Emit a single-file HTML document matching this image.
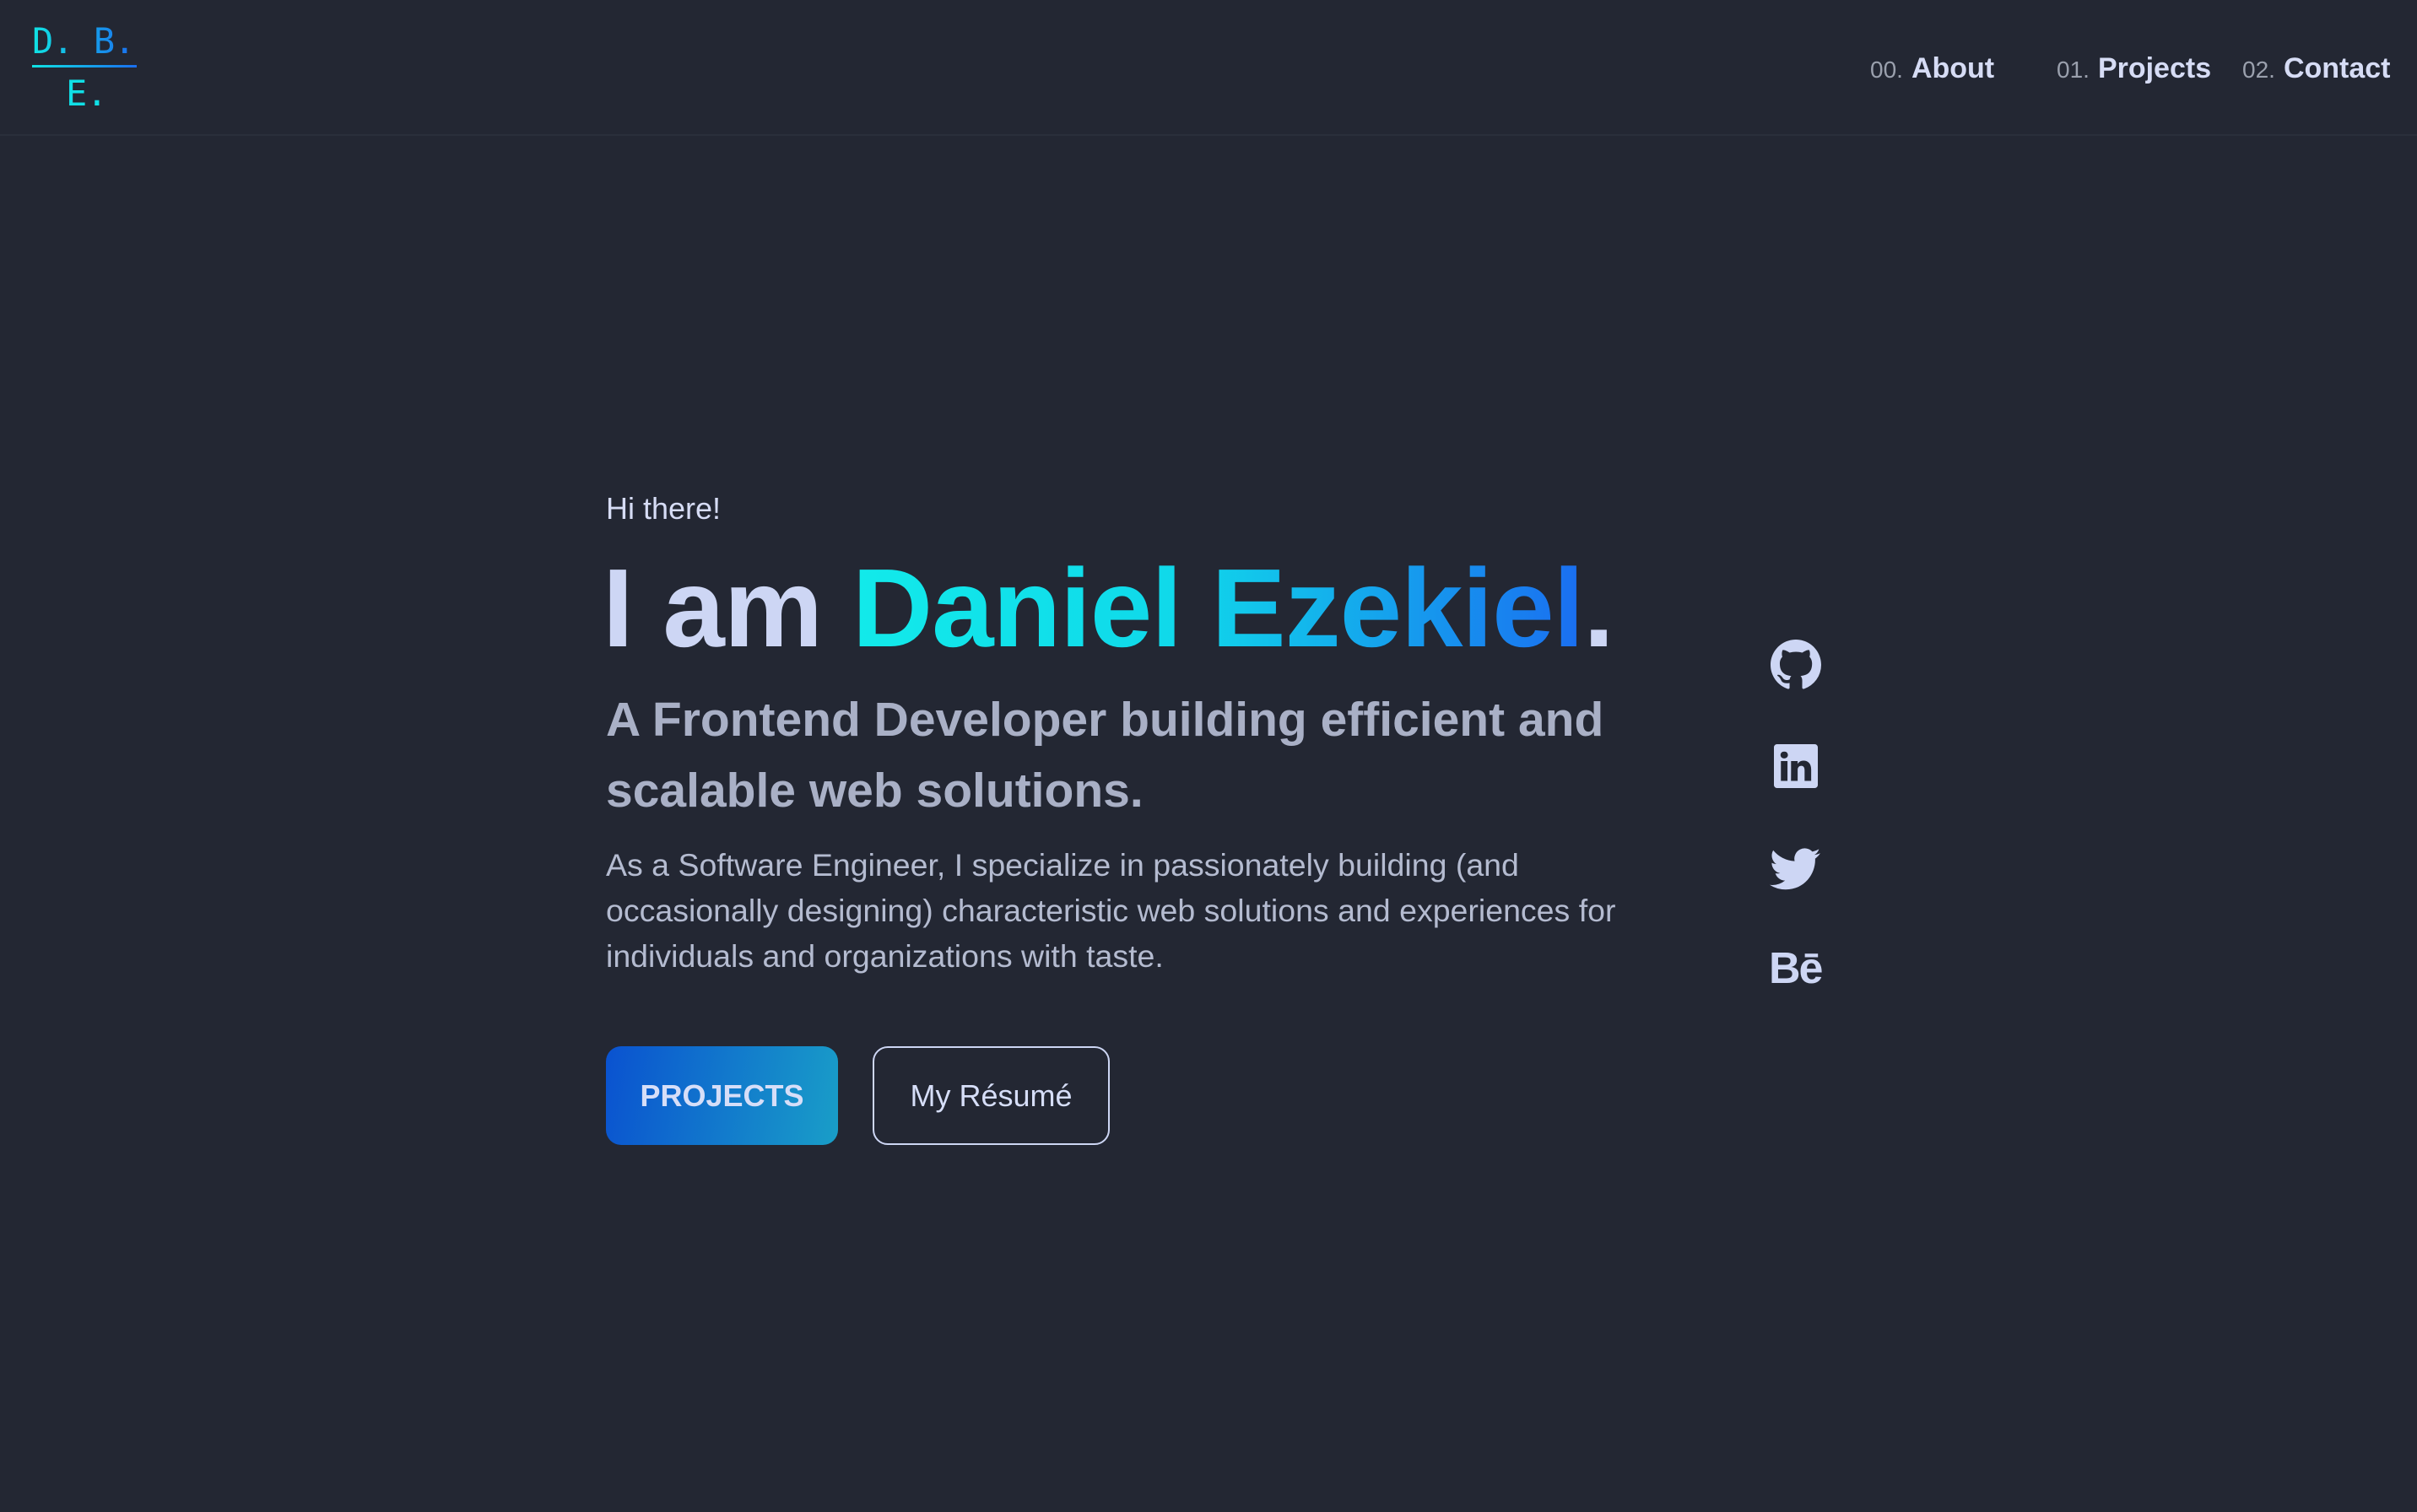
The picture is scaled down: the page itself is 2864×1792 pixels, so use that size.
<!DOCTYPE html>
<html><head><meta charset="utf-8">
<style>
*{margin:0;padding:0;box-sizing:border-box}
html,body{width:2864px;height:1792px;overflow:hidden;background:#232733;font-family:"Liberation Sans",sans-serif;color:#cdd6f4}
.hdr{position:absolute;left:0;top:0;width:2864px;height:161px;border-bottom:2px solid #2a2f3b}
.logo{position:absolute;left:38px;top:24px;font-family:"DejaVu Sans Mono","Liberation Mono",monospace;font-size:42px;letter-spacing:-1px}
.gr{background:linear-gradient(90deg,#10e3e3,#1a6ef0);-webkit-background-clip:text;background-clip:text;color:transparent}
.l1{position:absolute;left:0;top:0;white-space:nowrap}
.ul{position:absolute;left:38px;top:77px;width:124px;height:3px;background:linear-gradient(90deg,#10e3e3,#1a6ef0)}
.l2{position:absolute;left:78px;top:86px;color:#10dfe6;font-family:"DejaVu Sans Mono","Liberation Mono",monospace;font-size:42px;letter-spacing:-1px}
.nav{position:absolute;top:62px;font-size:34px;font-weight:bold;color:#d6dcf5;white-space:nowrap}
.nav span{font-weight:normal;color:#9aa0ad;font-size:28px;margin-right:10px}
.hi{position:absolute;left:718px;top:582px;font-size:36px;color:#d6dcf5}
h1{position:absolute;left:714px;top:645px;font-size:132px;font-weight:bold;white-space:nowrap;letter-spacing:-1px;color:#cdd6f4}
h1 .n{background:linear-gradient(90deg,#12eaea 0%,#10d8ea 45%,#1a6ef0 100%);-webkit-background-clip:text;background-clip:text;color:transparent}
.sub{position:absolute;left:718px;top:811px;font-size:57px;font-weight:bold;line-height:84px;color:#a9b0c6;width:1320px}
.p{position:absolute;left:718px;top:998px;font-size:37.5px;line-height:54px;color:#b4bbd0;width:1260px}
.b1{position:absolute;left:718px;top:1240px;width:275px;height:117px;border-radius:18px;background:linear-gradient(100deg,#0a52d0,#199ec8);color:#d6def8;font-weight:bold;font-size:36px;display:flex;align-items:center;justify-content:center}
.b2{position:absolute;left:1034px;top:1240px;width:281px;height:117px;border-radius:18px;border:2px solid #cdd6f4;color:#d6def8;font-size:36px;display:flex;align-items:center;justify-content:center}
.ic{position:absolute;fill:#cdd6f4}
.be{position:absolute;left:2096px;top:1118px;font-size:52px;font-weight:bold;color:#cdd6f4;letter-spacing:-2px}
</style></head><body>
<div class="hdr">
 <div class="logo"><span class="l1 gr">D. B.</span></div>
 <div class="ul"></div>
 <div class="l2">E.</div>
 <div class="nav" style="left:2216px"><span>00.</span>About</div>
 <div class="nav" style="left:2437px"><span>01.</span>Projects</div>
 <div class="nav" style="left:2657px"><span>02.</span>Contact</div>
</div>
<div class="hi">Hi there!</div>
<h1>I am <span class="n">Daniel Ezekiel</span>.</h1>
<div class="sub">A Frontend Developer building efficient and scalable web solutions.</div>
<div class="p">As a Software Engineer, I specialize in passionately building (and occasionally designing) characteristic web solutions and experiences for individuals and organizations with taste.</div>
<div class="b1">PROJECTS</div>
<div class="b2">My Résumé</div>
<svg class="ic" style="left:2098px;top:758px" width="60" height="60" viewBox="0 0 16 16"><path d="M8 0C3.58 0 0 3.58 0 8c0 3.54 2.29 6.53 5.47 7.59.4.07.55-.17.55-.38 0-.19-.01-.82-.01-1.49-2.01.37-2.53-.49-2.69-.94-.09-.23-.48-.94-.82-1.130-.28-.15-.68-.52-.01-.53.63-.01 1.08.58 1.23.82.72 1.21 1.87.87 2.33.66.07-.52.28-.87.51-1.07-1.78-.2-3.64-.89-3.64-3.95 0-.87.31-1.59.82-2.15-.08-.2-.36-1.020.08-2.12 0 0 .67-.21 2.2.82.64-.18 1.32-.27 2-.27.68 0 1.36.09 2 .27 1.53-1.04 2.2-.82 2.2-.82.44 1.1.16 1.92.08 2.12.51.56.82 1.27.82 2.15 0 3.07-1.87 3.75-3.65 3.95.29.25.54.73.54 1.48 0 1.07-.01 1.93-.01 2.2 0 .21.15.46.55.38A8.013 8.013 0 0016 8c0-4.42-3.58-8-8-8z"/></svg>
<svg class="ic" style="left:2102px;top:882px" width="52" height="52" viewBox="0 0 16 16"><path d="M0 1.15C0 .52.52 0 1.15 0h13.7C15.48 0 16 .52 16 1.15v13.7c0 .63-.52 1.15-1.15 1.15H1.15C.52 16 0 15.48 0 14.85V1.15zM4.94 13.4V6.17H2.54v7.23h2.4zM3.74 5.18c.84 0 1.36-.55 1.36-1.25-.02-.71-.52-1.25-1.34-1.25-.82 0-1.36.54-1.36 1.25 0 .7.52 1.25 1.330 1.25h.01zm4.91 8.22V9.36c0-.21.02-.43.08-.58.17-.43.57-.88 1.23-.88.87 0 1.22.66 1.22 1.63v3.87h2.4V9.26c0-2.22-1.18-3.25-2.77-3.25-1.28 0-1.85.7-2.17 1.2v.03h-.02l.02-.03V6.17h-2.4c.03.68 0 7.23 0 7.23h2.4z"/></svg>
<svg class="ic" style="left:2097px;top:1000px" width="60" height="56" viewBox="0 0 16 14"><path d="M5.03 14c6.04 0 9.34-5 9.34-9.34 0-.14 0-.28-.01-.42A6.68 6.68 0 0016 2.54a6.55 6.55 0 01-1.89.52 3.3 3.3 0 001.45-1.82 6.57 6.57 0 01-2.08.8A3.28 3.28 0 007.88 5.03 9.32 9.32 0 011.11 1.6a3.28 3.28 0 001.02 4.38A3.26 3.26 0 01.64 5.57v.04a3.28 3.28 0 002.63 3.22 3.28 3.28 0 01-1.48.06 3.29 3.29 0 003.07 2.28A6.59 6.59 0 010 12.54 9.29 9.29 0 005.03 14"/></svg>
<div class="be">Bē</div>
</body></html>
